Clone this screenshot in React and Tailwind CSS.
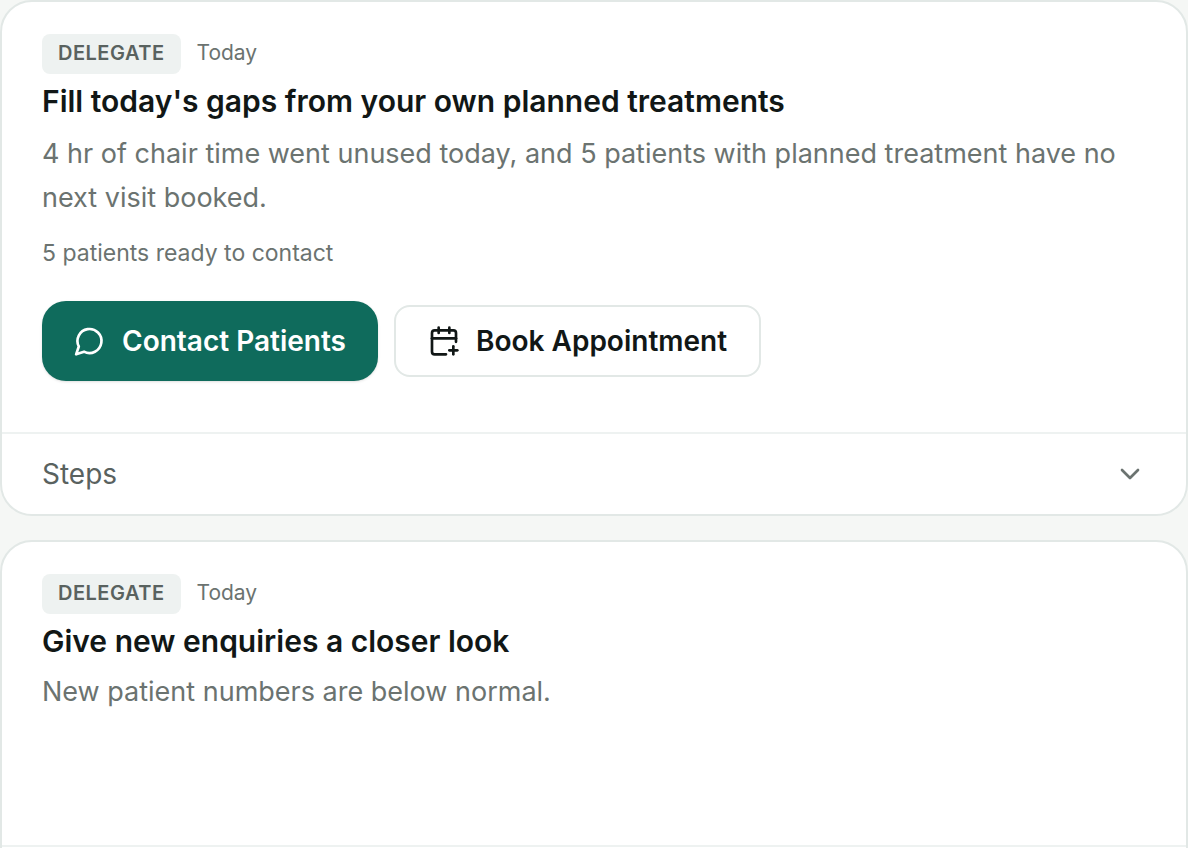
import { CalendarPlus, ChevronDown } from "lucide-react";

const actions = [
  {
    id: "fill-gaps",
    owner: "Delegate",
    due: "Today",
    title: "Fill today's gaps from your own planned treatments",
    summary:
      "4 hr of chair time went unused today, and 5 patients with planned treatment have no next visit booked.",
    note: "5 patients ready to contact",
    canContact: true,
  },
  {
    id: "new-enquiries",
    owner: "Delegate",
    due: "Today",
    title: "Give new enquiries a closer look",
    summary: "New patient numbers are below normal.",
  },
];

function IconMessage() {
  return (
    <svg
      className="size-8 shrink-0"
      viewBox="0 0 24 24"
      fill="none"
      stroke="currentColor"
      strokeWidth="2"
      strokeLinecap="round"
      strokeLinejoin="round"
      aria-hidden="true"
    >
      <path d="M7.5 20A9 9 0 1 0 3.6 16.1L1.6 22Z" />
    </svg>
  );
}

function ActionCard({ action }) {
  return (
    <article className="shrink-0 overflow-hidden rounded-[32px] border-2 border-[#e2e8e6] bg-white">
      <div className="px-10 pt-8 pb-[51px]">
        <div className="flex items-start gap-4">
          <span className="rounded-lg bg-[#eef2f1] px-4 pt-1 pb-1.5 text-[20px] leading-[30px] font-semibold tracking-wide text-[#59625f] uppercase">
            {action.owner}
          </span>
          <span className="text-[21px] leading-[38px] text-[#6b7370]">{action.due}</span>
        </div>
        <h2 className="mt-[7px] text-[30px] leading-10 font-semibold text-[#111716]">
          {action.title}
        </h2>
        <p
          className={`mt-[11px] text-[27px] text-[#6b7370] ${
            action.note ? "leading-11" : "leading-10"
          }`}
        >
          {action.summary}
        </p>
        {action.note && (
          <p className="mt-4 text-[23px] leading-[34px] text-[#6b7370]">{action.note}</p>
        )}

        {/* Buttons */}
        {action.canContact ? (
          <div className="mt-[31px] flex flex-wrap items-center gap-4">
            <button
              type="button"
              className="flex h-20 items-center gap-4 rounded-3xl bg-[#0f6b5c] px-8 text-[28px] font-semibold text-white shadow-sm"
            >
              <IconMessage />
              Contact Patients
            </button>
            <button
              type="button"
              className="flex h-18 items-center gap-4 rounded-2xl border-2 border-[#e2e8e6] bg-white px-8 text-[28px] font-semibold text-[#111716]"
            >
              <CalendarPlus className="size-8" />
              Book Appointment
            </button>
          </div>
        ) : (
          <div className="h-[82px]" />
        )}
      </div>

      <button
        type="button"
        className="flex w-full items-center justify-between border-t-2 border-[#eef2f1] px-10 py-5 text-[28px] leading-10 text-[#59625f]"
      >
        Steps
        <ChevronDown className="size-8 text-[#6b7370]" />
      </button>
    </article>
  );
}

export default function App() {
  return (
    <main className="flex h-screen flex-col gap-6 overflow-y-auto bg-[#f5f7f5] font-['Inter',sans-serif] [scrollbar-width:none]">
      {actions.map((action) => (
        <ActionCard key={action.id} action={action} />
      ))}
    </main>
  );
}
